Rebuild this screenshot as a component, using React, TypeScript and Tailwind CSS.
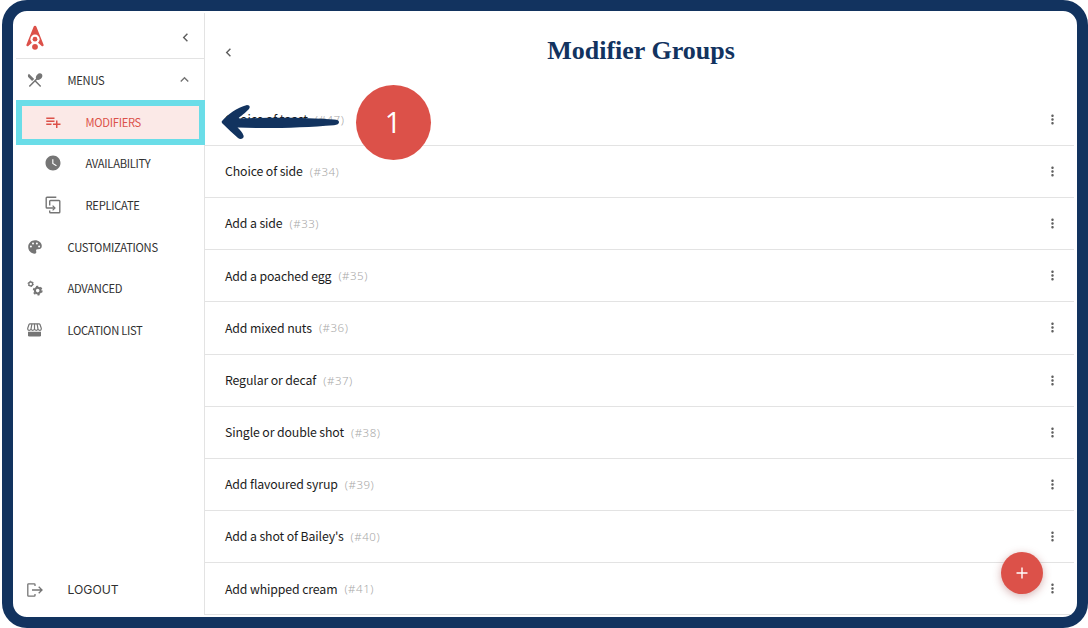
import type { ReactNode } from "react";
import {
  MdChevronLeft,
  MdExpandLess,
  MdMoreVert,
  MdPlaylistAdd,
  MdRestaurantMenu,
  MdWatchLater,
} from "react-icons/md";

interface ModifierGroup {
  id: number;
  name: string;
}

interface NavItem {
  label: string;
  icon: ReactNode;
  nested?: boolean;
  active?: boolean;
  expandable?: boolean;
}

const groups: ModifierGroup[] = [
  { id: 47, name: "Choice of toast" },
  { id: 34, name: "Choice of side" },
  { id: 33, name: "Add a side" },
  { id: 35, name: "Add a poached egg" },
  { id: 36, name: "Add mixed nuts" },
  { id: 37, name: "Regular or decaf" },
  { id: 38, name: "Single or double shot" },
  { id: 39, name: "Add flavoured syrup" },
  { id: 40, name: "Add a shot of Bailey's" },
  { id: 41, name: "Add whipped cream" },
];

function Logo() {
  return (
    <svg width="18" height="25" viewBox="0 0 18 25" fill="#dc5149">
      <path d="M9 0.7Q10 0.7 10.4 1.8L17.6 19.8Q17.8 21.3 16.6 21.3Q15.9 21.3 15.4 20.8L9 15L2.6 20.8Q2.1 21.3 1.4 21.3Q0.2 21.3 0.4 19.8L7.6 1.8Q8 0.7 9 0.7Z" />
      <circle cx="9" cy="14.2" r="4.6" fill="white" />
      <circle cx="9" cy="14.2" r="2.4" />
      <circle cx="9" cy="21.8" r="2.9" />
    </svg>
  );
}

function ReplicateIcon() {
  return (
    <svg width="16" height="18" viewBox="0 0 16 18" fill="none" stroke="currentColor" strokeWidth="1.4">
      <path d="M11.3 1.2H2Q1.2 1.2 1.2 2V11.2Q1.2 12 2 12H9.6" />
      <path d="M4.7 9.5V5.3Q4.7 4.5 5.5 4.5H14Q14.8 4.5 14.8 5.3V15.9Q14.8 16.7 14 16.7H5.5Q4.7 16.7 4.7 15.9V14.4" />
      <path d="M7.6 9.6L10 12L7.6 14.4" strokeWidth="1.2" />
    </svg>
  );
}

function PaletteIcon() {
  return (
    <svg width="14" height="14" viewBox="0 0 14 14" fill="currentColor">
      <path d="M6.6 13.7C3 13.5 0.2 10.6 0.2 7C0.2 3 3.3 0.2 7 0.2C10.8 0.2 13.8 2.7 13.8 6C13.8 8.4 12.2 9.3 10.3 9.3H9.4C8.2 9.3 7.9 10.2 8.2 11.2C8.7 12.8 7.9 13.7 6.6 13.7Z" />
      <g fill="white">
        <circle cx="2.9" cy="6.4" r="1" />
        <circle cx="5" cy="3.4" r="1" />
        <circle cx="8.9" cy="3.4" r="1" />
        <circle cx="11.1" cy="6.4" r="1" />
      </g>
    </svg>
  );
}

function GearsIcon() {
  return (
    <svg width="16" height="16" viewBox="0 0 16 16" fill="none" stroke="currentColor">
      <circle cx="3.7" cy="3.9" r="1.9" strokeWidth="1.3" />
      <circle cx="3.7" cy="3.9" r="2.7" strokeWidth="1" strokeDasharray="1.4 1.43" />
      <circle cx="10.7" cy="10.6" r="2.8" strokeWidth="2" />
      <circle cx="10.7" cy="10.6" r="4.2" strokeWidth="1.5" strokeDasharray="2.2 2.2" />
    </svg>
  );
}

function StoreIcon() {
  return (
    <svg width="15" height="14" viewBox="0 0 15 14" fill="none" stroke="currentColor" strokeWidth="1.2">
      <path d="M3 0.8H12Q12.7 0.8 13 1.5L14.3 5.3Q14.4 7.3 12.7 7.3Q11.2 7.3 11 6Q10.8 7.3 9.3 7.3Q7.7 7.3 7.5 6Q7.3 7.3 5.7 7.3Q4.2 7.3 4 6Q3.8 7.3 2.3 7.3Q0.6 7.3 0.7 5.3L2 1.5Q2.3 0.8 3 0.8Z" />
      <path d="M4.9 0.8L4 6.2M7.5 0.8V6.2M10.1 0.8L11 6.2" />
      <path d="M1 8.7H14V12.3Q14 13.6 12.7 13.6H2.3Q1 13.6 1 12.3Z" fill="currentColor" stroke="none" />
    </svg>
  );
}

function LogoutIcon() {
  return (
    <svg width="16" height="14" viewBox="0 0 16 14" fill="none" stroke="currentColor" strokeWidth="1.3">
      <path d="M8 3V1.5Q8 0.8 7.3 0.8H1.5Q0.8 0.8 0.8 1.5V12.5Q0.8 13.2 1.5 13.2H7.3Q8 13.2 8 12.5V11" />
      <path d="M5 7H15M11.7 3.8L15 7L11.7 10.2" />
    </svg>
  );
}

const navItems: NavItem[] = [
  { label: "MENUS", icon: <MdRestaurantMenu size={18} />, expandable: true },
  { label: "MODIFIERS", icon: <MdPlaylistAdd size={18} />, nested: true, active: true },
  { label: "AVAILABILITY", icon: <MdWatchLater size={18} />, nested: true },
  { label: "REPLICATE", icon: <ReplicateIcon />, nested: true },
  { label: "CUSTOMIZATIONS", icon: <PaletteIcon /> },
  { label: "ADVANCED", icon: <GearsIcon /> },
  { label: "LOCATION LIST", icon: <StoreIcon /> },
];

function NavRow({ item }: { item: NavItem }) {
  const indent = item.nested ? "pl-[26.5px]" : "pl-[8.5px]";
  const color = item.active ? "text-[#dc5149]" : "text-[#303030]";
  const iconColor = item.active ? "text-[#dc5149]" : "text-[#757575]";

  return (
    <div className={`relative flex h-[41.7px] shrink-0 items-center ${indent}`}>
      {item.active && (
        <div className="absolute -top-[1px] left-0 h-[45px] w-[189px] border-[6px] border-[#6adde8] bg-[#fbe9e7]" />
      )}
      <span className={`relative flex w-5 justify-center ${iconColor}`}>{item.icon}</span>
      <span className={`relative ml-[23px] text-[11.2px] leading-4 tracking-[-0.28px] ${color}`}>
        {item.label}
      </span>
      {item.expandable && <MdExpandLess size={17} className="mr-[11.5px] ml-auto text-[#757575]" />}
    </div>
  );
}

function Sidebar() {
  return (
    <aside className="mt-0.5 mb-0.5 ml-[3px] flex w-[189px] shrink-0 flex-col border-r border-[#e3e3e3]">
      <div className="flex h-[46px] shrink-0 items-center justify-between border-b border-[#e3e3e3] pt-1 pr-[10px] pl-[10px]">
        <Logo />
        <MdChevronLeft size={17} className="text-[#606060]" />
      </div>
      <nav className="flex flex-col">
        {navItems.map((item) => (
          <NavRow key={item.label} item={item} />
        ))}
      </nav>
      <div className="mt-auto flex h-[51px] items-center pl-[11px]">
        <span className="text-[#757575]">
          <LogoutIcon />
        </span>
        <span className="ml-[24.5px] pt-0.5 font-['Inter','Liberation_Sans',sans-serif] text-[12.2px] text-[#303030]">
          LOGOUT
        </span>
      </div>
    </aside>
  );
}

function GroupRow({ group }: { group: ModifierGroup }) {
  return (
    <li className="flex h-[52.2px] items-center border-b border-[#e3e3e3] pr-[14.5px] pl-5">
      <span className="text-[12.3px] tracking-[-0.12px] text-[#1c1c1c]">{group.name}</span>
      <span className="ml-[7px] font-['Noto_Sans',sans-serif] text-[11.5px] font-light tracking-[0.5px] text-[#a8a8a8]">
        (#{group.id})
      </span>
      <MdMoreVert size={15} className="ml-auto text-[#606060]" />
    </li>
  );
}

// Step marker with the arrow that points at the active menu entry
function StepCallout() {
  return (
    <div className="absolute top-[73.5px] left-[207px] flex items-center">
      <svg width="123" height="36" viewBox="0 0 123 36" fill="#12335f">
        <path d="M2 17Q1 18.3 3 20C8 25 13 29.5 18 34C20.5 36 24.5 34.5 23.5 31.5C22.5 28.5 20 26 17.5 23.6C50 24.8 85 23.5 114 21.2Q119 20.6 119 18.2Q119 16 114 15.6C85 13.4 52 13.4 18 14.6C22.5 10.5 28 7 29.5 4Q30.5 1 27 1C16.5 4 8 10 2 17Z" />
      </svg>
      <div className="ml-[12.5px] flex size-[75px] items-center justify-center rounded-full bg-[#dc5149] font-['Open_Sans',sans-serif] text-[29px] text-white">
        1
      </div>
    </div>
  );
}

export default function App() {
  return (
    <div className="h-[628px] w-[1088px] overflow-hidden bg-white pl-0.5 font-['Noto_Sans_CJK_SC',sans-serif]">
      <div className="relative flex h-[628px] w-[1086px] overflow-hidden rounded-[25px] border-[11px] border-[#12335f] bg-white">
        <Sidebar />
        <main className="mr-[3px] flex min-w-0 flex-1 flex-col">
          <header className="grid h-[82.6px] shrink-0 grid-cols-[1fr_auto_1fr] items-center pl-[3px]">
            <MdChevronLeft size={17} className="ml-3 text-[#606060]" />
            <h1 className="pb-[3px] font-['Liberation_Serif',serif] text-[26px] font-bold text-[#12335f]">
              Modifier Groups
            </h1>
          </header>
          <ul>
            {groups.map((group) => (
              <GroupRow key={group.id} group={group} />
            ))}
          </ul>
        </main>
        <StepCallout />
        <button className="absolute right-[34px] bottom-[23px] flex size-[42px] items-center justify-center rounded-full bg-[#dc5149] text-white shadow-[0_2px_8px_rgba(150,60,60,0.4)]">
          <svg width="12" height="12" viewBox="0 0 12 12" stroke="currentColor" strokeWidth="1.4">
            <path d="M6 0.5V11.5M0.5 6H11.5" />
          </svg>
        </button>
      </div>
    </div>
  );
}
